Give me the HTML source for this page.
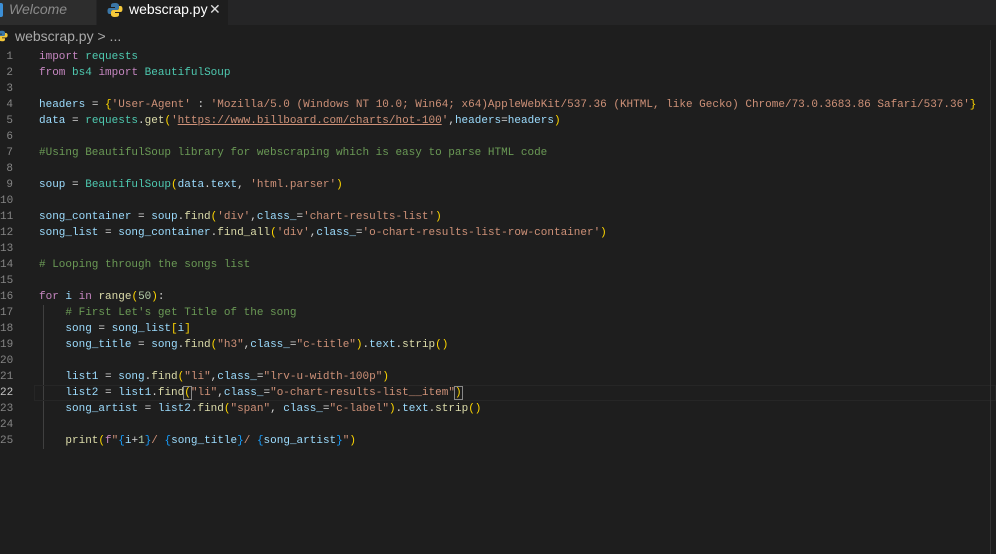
<!DOCTYPE html>
<html><head><meta charset="utf-8"><style>
body{margin:0;width:996px;height:554px;background:#1e1e1e;overflow:hidden;font-family:"Liberation Sans",sans-serif;position:relative}
.tabs{position:absolute;left:0;top:0;width:996px;height:25px;background:#252526}
.tab{position:absolute;top:0;height:25px;line-height:19px;font-size:14px}
.t1{left:0;width:96px;background:#2d2d2d;color:#8a8a8a;font-style:italic}
.t2{left:97px;width:131px;background:#1e1e1e;color:#fff}
.crumb{position:absolute;top:27px;left:0;font-size:14px;color:#a9a9a9;line-height:18px}
.code{position:absolute;top:49px;left:0;font-family:"Liberation Mono",monospace;font-size:11px;line-height:16px;color:#d4d4d4;white-space:pre}
.ln{position:absolute;left:0;width:13px;text-align:right;color:#858585}
.tx{position:absolute;left:39px}
.k{color:#c586c0}.v{color:#9cdcfe}.s{color:#ce9178}.c{color:#6a9955}.t{color:#4ec9b0}.f{color:#dcdcaa}.y{color:#ffd700}.p{color:#da70d6}.b{color:#179fff}.n{color:#b5cea8}.u{text-decoration:underline}
.guide{position:absolute;left:43px;top:305px;width:1px;height:144px;background:#404040}
.cur{position:absolute;left:34px;top:385px;width:960px;height:14px;border:1px solid #262626}
.sb{position:absolute;left:990px;top:40px;width:1px;height:514px;background:#333}
</style></head><body>
<div class="tabs">
<div class="tab t1"><span style="position:absolute;left:-3px;top:3px;width:6px;height:14px;background:#3c8fd6;border-radius:2px"></span><span style="position:absolute;left:9px">Welcome</span></div>
<div class="tab t2"><svg style="position:absolute;left:10px;top:2px" width="16" height="16" viewBox="0 0 16 16"><path d="M8 1C4 1 4 2.5 4 3.5V5h4v1H2.5C1 6 0.5 7.5 0.5 9s.5 3 2 3H4V10c0-1.2 1-2 2-2h4c1 0 2-1 2-2V3.5C12 2 10.5 1 8 1z" fill="#3b77a8"/><path d="M8 15c4 0 4-1.5 4-2.5V11H8v-1h5.5c1.5 0 2-1.5 2-3s-.5-3-2-3H12v2c0 1.2-1 2-2 2H6c-1 0-2 1-2 2v2.5C4 14 5.5 15 8 15z" fill="#f5c93a"/></svg><span style="position:absolute;left:32px">webscrap.py</span><span style="position:absolute;left:112px;color:#ddd">✕</span></div>
</div>
<div class="crumb"><svg style="position:absolute;left:-4px;top:2px" width="12" height="14" viewBox="0 0 16 16"><path d="M8 1C4 1 4 2.5 4 3.5V5h4v1H2.5C1 6 .5 7.5 .5 9s.5 3 2 3H4V10c0-1.2 1-2 2-2h4c1 0 2-1 2-2V3.5C12 2 10.5 1 8 1z" fill="#3b77a8"/><path d="M8 15c4 0 4-1.5 4-2.5V11H8v-1h5.5c1.5 0 2-1.5 2-3s-.5-3-2-3H12v2c0 1.2-1 2-2 2H6c-1 0-2 1-2 2v2.5C4 14 5.5 15 8 15z" fill="#f5c93a"/></svg><span style="position:absolute;left:15px;white-space:nowrap">webscrap.py &gt; ...</span></div>
<div class="guide"></div>
<div class="cur"></div>
<div class="sb"></div>
<div class="code">
<div class="ln" style="top:0">1</div><div class="tx" style="top:0"><span class="k">import</span> <span class="t">requests</span></div>
<div class="ln" style="top:16px">2</div><div class="tx" style="top:16px"><span class="k">from</span> <span class="t">bs4</span> <span class="k">import</span> <span class="t">BeautifulSoup</span></div>
<div class="ln" style="top:32px">3</div>
<div class="ln" style="top:48px">4</div><div class="tx" style="top:48px"><span class="v">headers</span> = <span class="y">{</span><span class="s">'User-Agent'</span> : <span class="s">'Mozilla/5.0 (Windows NT 10.0; Win64; x64)AppleWebKit/537.36 (KHTML, like Gecko) Chrome/73.0.3683.86 Safari/537.36'</span><span class="y">}</span></div>
<div class="ln" style="top:64px">5</div><div class="tx" style="top:64px"><span class="v">data</span> = <span class="t">requests</span>.<span class="f">get</span><span class="y">(</span><span class="s">'<span class="u">https://www.billboard.com/charts/hot-100</span>'</span>,<span class="v">headers</span>=<span class="v">headers</span><span class="y">)</span></div>
<div class="ln" style="top:80px">6</div>
<div class="ln" style="top:96px">7</div><div class="tx" style="top:96px"><span class="c">#Using BeautifulSoup library for webscraping which is easy to parse HTML code</span></div>
<div class="ln" style="top:112px">8</div>
<div class="ln" style="top:128px">9</div><div class="tx" style="top:128px"><span class="v">soup</span> = <span class="t">BeautifulSoup</span><span class="y">(</span><span class="v">data</span>.<span class="v">text</span>, <span class="s">'html.parser'</span><span class="y">)</span></div>
<div class="ln" style="top:144px">10</div>
<div class="ln" style="top:160px">11</div><div class="tx" style="top:160px"><span class="v">song_container</span> = <span class="v">soup</span>.<span class="f">find</span><span class="y">(</span><span class="s">'div'</span>,<span class="v">class_</span>=<span class="s">'chart-results-list'</span><span class="y">)</span></div>
<div class="ln" style="top:176px">12</div><div class="tx" style="top:176px"><span class="v">song_list</span> = <span class="v">song_container</span>.<span class="f">find_all</span><span class="y">(</span><span class="s">'div'</span>,<span class="v">class_</span>=<span class="s">'o-chart-results-list-row-container'</span><span class="y">)</span></div>
<div class="ln" style="top:192px">13</div>
<div class="ln" style="top:208px">14</div><div class="tx" style="top:208px"><span class="c"># Looping through the songs list</span></div>
<div class="ln" style="top:224px">15</div>
<div class="ln" style="top:240px">16</div><div class="tx" style="top:240px"><span class="k">for</span> <span class="v">i</span> <span class="k">in</span> <span class="f">range</span><span class="y">(</span><span class="n">50</span><span class="y">)</span>:</div>
<div class="ln" style="top:256px">17</div><div class="tx" style="top:256px">    <span class="c"># First Let's get Title of the song</span></div>
<div class="ln" style="top:272px">18</div><div class="tx" style="top:272px">    <span class="v">song</span> = <span class="v">song_list</span><span class="y">[</span><span class="v">i</span><span class="y">]</span></div>
<div class="ln" style="top:288px">19</div><div class="tx" style="top:288px">    <span class="v">song_title</span> = <span class="v">song</span>.<span class="f">find</span><span class="y">(</span><span class="s">"h3"</span>,<span class="v">class_</span>=<span class="s">"c-title"</span><span class="y">)</span>.<span class="v">text</span>.<span class="f">strip</span><span class="y">()</span></div>
<div class="ln" style="top:304px">20</div>
<div class="ln" style="top:320px">21</div><div class="tx" style="top:320px">    <span class="v">list1</span> = <span class="v">song</span>.<span class="f">find</span><span class="y">(</span><span class="s">"li"</span>,<span class="v">class_</span>=<span class="s">"lrv-u-width-100p"</span><span class="y">)</span></div>
<div class="ln" style="top:336px;color:#c6c6c6">22</div><div class="tx" style="top:336px">    <span class="v">list2</span> = <span class="v">list1</span>.<span class="f">find</span><span class="y" style="outline:1px solid #888">(</span><span class="s">"li"</span>,<span class="v">class_</span>=<span class="s">"o-chart-results-list__item"</span><span class="y" style="outline:1px solid #888">)</span></div>
<div class="ln" style="top:352px">23</div><div class="tx" style="top:352px">    <span class="v">song_artist</span> = <span class="v">list2</span>.<span class="f">find</span><span class="y">(</span><span class="s">"span"</span>, <span class="v">class_</span>=<span class="s">"c-label"</span><span class="y">)</span>.<span class="v">text</span>.<span class="f">strip</span><span class="y">()</span></div>
<div class="ln" style="top:368px">24</div>
<div class="ln" style="top:384px">25</div><div class="tx" style="top:384px">    <span class="f">print</span><span class="y">(</span><span class="k">f</span><span class="s">"</span><span class="b">{</span><span class="v">i</span>+<span class="n">1</span><span class="b">}</span><span class="s">/ </span><span class="b">{</span><span class="v">song_title</span><span class="b">}</span><span class="s">/ </span><span class="b">{</span><span class="v">song_artist</span><span class="b">}</span><span class="s">"</span><span class="y">)</span></div>
</div>
</body></html>
